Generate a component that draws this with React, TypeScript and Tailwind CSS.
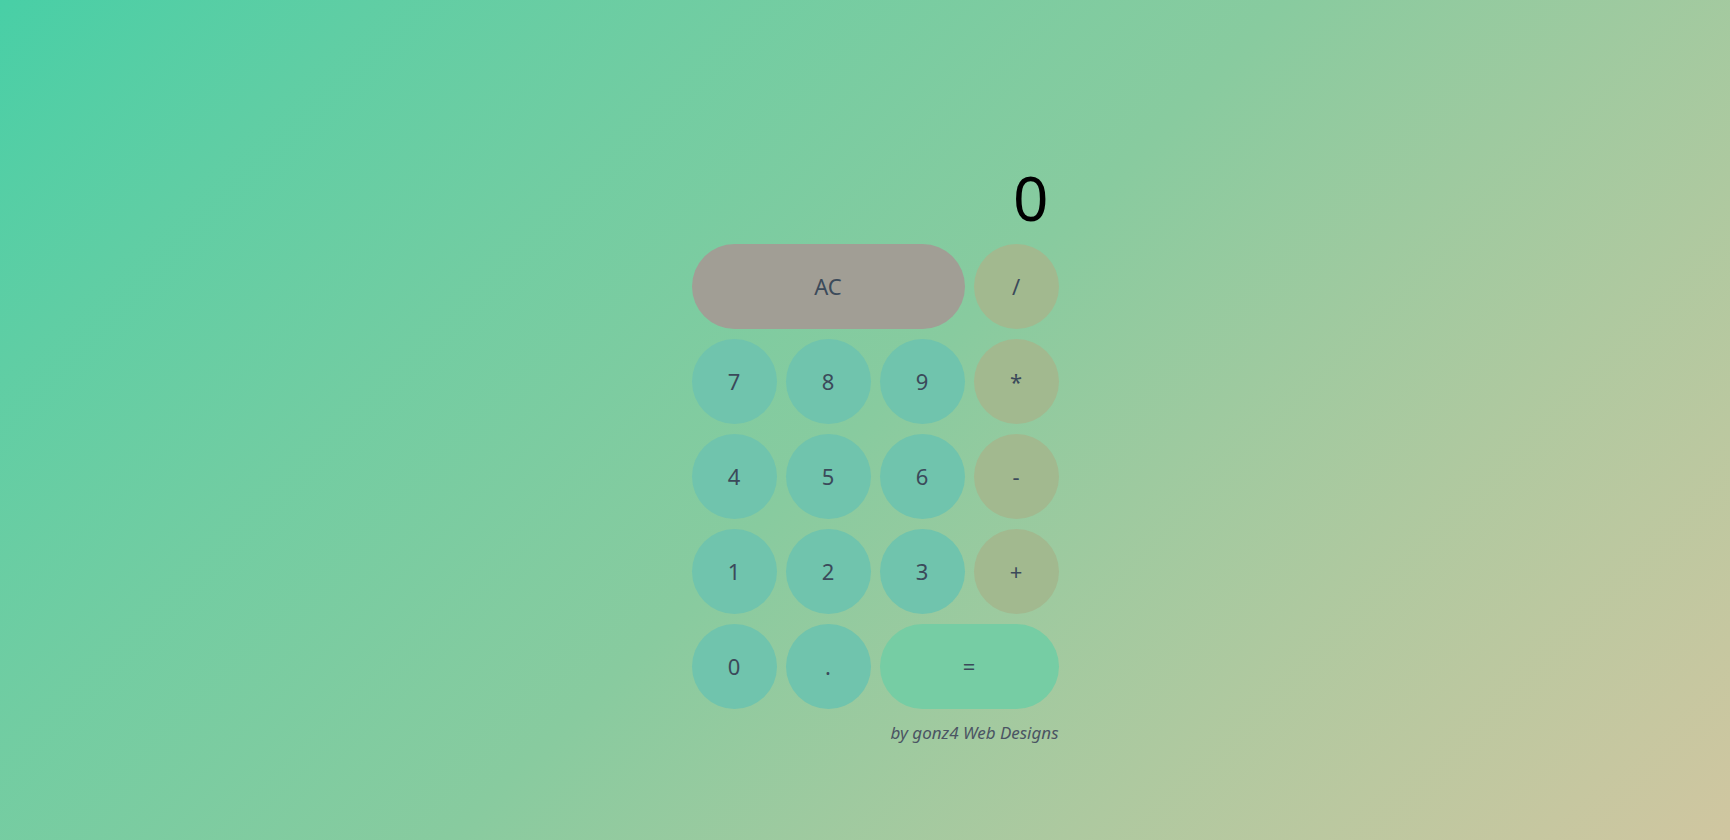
import React from 'react'

const num = 'bg-[#70c4ad]'
const op = 'bg-[#a2b98f]'

const Key = ({ label, cls }: { label: string; cls: string }) => (
  <button className={`h-[85px] rounded-full ${cls} text-[22px] text-[#3b4a5a] flex items-center justify-center`}>
    {label}
  </button>
)

const App = () => {
  return (
    <div
      className="w-full h-[840px] bg-linear-135 from-[#48cfa6] via-[#88cb9f] to-[#d0c6a0] flex justify-center"
      style={{ fontFamily: '"Noto Sans", "Open Sans", sans-serif' }}
    >
      <div className="pl-5 pt-[158px]">
        <div className="w-[367px]">
          <div className="h-[78px] pr-[10px] text-right text-[62px] leading-[78px] text-black">0</div>
          <div className="grid grid-cols-4 gap-x-[9px] gap-y-[10px] mt-[8px]">
            <button className="col-span-3 h-[85px] rounded-full bg-[#a19e95] text-[22px] text-[#3b4a5a]">AC</button>
            <Key label="/" cls={op} />
            <Key label="7" cls={num} />
            <Key label="8" cls={num} />
            <Key label="9" cls={num} />
            <Key label="*" cls={op} />
            <Key label="4" cls={num} />
            <Key label="5" cls={num} />
            <Key label="6" cls={num} />
            <Key label="-" cls={op} />
            <Key label="1" cls={num} />
            <Key label="2" cls={num} />
            <Key label="3" cls={num} />
            <Key label="+" cls={op} />
            <Key label="0" cls={num} />
            <Key label="." cls={num} />
            <button className="col-span-2 h-[85px] rounded-full bg-[#76cda4] text-[22px] text-[#3b4a5a]">=</button>
          </div>
          <div className="mt-[11px] text-right text-[17px] italic text-[#4b5563]">by gonz4 Web Designs</div>
        </div>
      </div>
    </div>
  )
}

export default App
